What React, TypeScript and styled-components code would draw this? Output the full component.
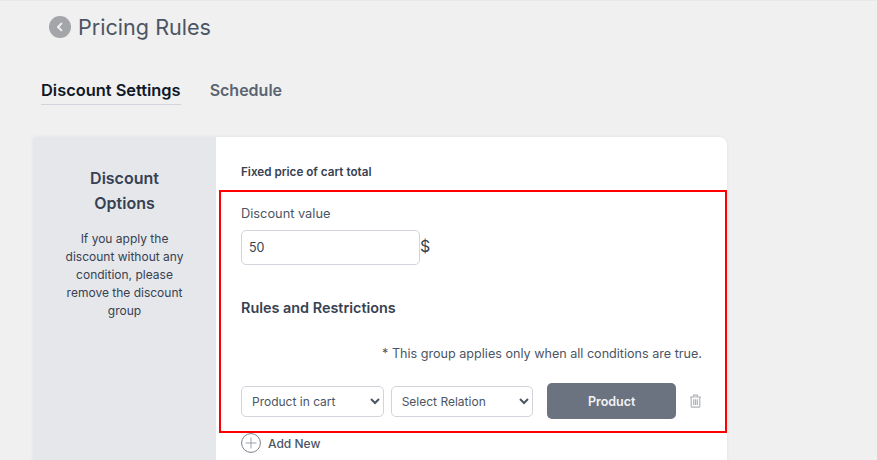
import React from "react";
import styled, { createGlobalStyle } from "styled-components";

const GlobalStyle = createGlobalStyle`
  html, body {
    margin: 0;
    height: 100%;
    overflow: hidden;
    background: #f0f0f1;
    font-family: Inter, "Liberation Sans", sans-serif;
  }
`;

const Page = styled.div`
  width: 877px;
  height: 460px;
  overflow: hidden;
  box-sizing: border-box;
  border-top: 1px solid #e8e8e9;
`;

const Header = styled.header`
  display: flex;
  align-items: center;
  gap: 7px;
  padding: 11px 0 0 49px;
  height: 30px;
`;

const BackButton = styled.span`
  display: flex;
  align-items: center;
  justify-content: center;
  width: 22px;
  height: 22px;
  border-radius: 50%;
  background: #a3a5a8;
`;

const Title = styled.h1`
  margin: 0;
  font-size: 21.6px;
  line-height: 30px;
  font-weight: 400;
  color: #4b5563;
`;

const Tabs = styled.nav`
  display: flex;
  gap: 29px;
  padding: 37px 0 0 41px;
  height: 32px;
`;

const Tab = styled.span<{ $active?: boolean }>`
  height: 25px;
  font-size: ${(p) => (p.$active ? "16.4px" : "16px")};
  line-height: 22px;
  font-weight: 600;
  color: ${(p) => (p.$active ? "#111827" : "#5b6472")};
  border-bottom: ${(p) => (p.$active ? "1px solid #d1d5db" : "none")};
`;

const Card = styled.section`
  display: flex;
  width: 694px;
  height: 340px;
  margin: 26px 0 0 33px;
  background: #fff;
  border-radius: 2px 8px 0 0;
  box-shadow: 0 0 4px rgba(0, 0, 0, 0.06);
`;

const Sidebar = styled.aside`
  width: 183px;
  flex: none;
  box-sizing: border-box;
  padding: 29px 30px 0;
  background: #e5e7eb;
  border-radius: 2px 0 0 0;
  text-align: center;
`;

const SidebarTitle = styled.h2`
  margin: 0 0 14px;
  font-size: 16px;
  line-height: 25px;
  font-weight: 600;
  color: #374151;
`;

const SidebarText = styled.p`
  margin: 0;
  font-size: 12px;
  line-height: 18px;
  color: #374151;
`;

const Main = styled.div`
  flex: 1;
  min-width: 0;
  padding: 27px 0 0 3px;
`;

const Subtitle = styled.div`
  margin-left: 22px;
  font-size: 11.7px;
  line-height: 16px;
  font-weight: 600;
  color: #374151;
`;

const Highlight = styled.div`
  box-sizing: border-box;
  height: 243px;
  margin-top: 10px;
  padding: 14px 23px 0 20px;
  border: 2px solid #f00;
`;

const FieldLabel = styled.label`
  display: block;
  font-size: 12.8px;
  line-height: 16px;
  color: #4b5563;
`;

const ValueRow = styled.div`
  display: flex;
  align-items: center;
  margin-top: 8px;
`;

const ValueInput = styled.input`
  box-sizing: border-box;
  width: 179px;
  height: 35px;
  padding: 0 7px;
  border: 1px solid #d1d5db;
  border-radius: 5px;
  background: #fff;
  font-family: inherit;
  font-size: 12.5px;
  color: #374151;
  outline: none;
`;

const Currency = styled.span`
  margin-top: -3px;
  font-size: 16px;
  color: #374151;
`;

const SectionTitle = styled.h3`
  margin: 34px 0 0;
  font-size: 14.4px;
  line-height: 18px;
  font-weight: 600;
  color: #374151;
`;

const Note = styled.p`
  margin: 29px 0 0;
  font-size: 12.6px;
  line-height: 16px;
  text-align: right;
  color: #4b5563;
`;

const RuleRow = styled.div`
  display: flex;
  align-items: center;
  margin-top: 21px;
`;

const RuleSelect = styled.select<{ $width: number }>`
  box-sizing: border-box;
  width: ${(p) => p.$width}px;
  height: 31px;
  margin-right: 7px;
  padding: 0 6px;
  border: 1px solid #d1d5db;
  border-radius: 5px;
  background: #fff;
  font-family: inherit;
  font-size: 12px;
  color: #4b5563;
  outline: none;
`;

const ProductButton = styled.button`
  width: 129px;
  height: 36px;
  margin-left: 7px;
  border: none;
  border-radius: 5px;
  background: #6b7280;
  font-family: inherit;
  font-size: 12.5px;
  font-weight: 600;
  color: #f3f4f6;
`;

const TrashButton = styled.span`
  display: flex;
  margin-left: 13px;
  color: #b0b3b8;
`;

const AddNew = styled.div`
  display: flex;
  align-items: center;
  gap: 7px;
  margin: 0 0 0 22px;
  font-size: 12px;
  font-weight: 500;
  color: #4b5563;
`;

const BackIcon = () => (
  <svg width="10" height="10" viewBox="0 0 10 10" fill="none">
    <path d="M6.4 1.6 3 5l3.4 3.4" stroke="#f0f0f1" strokeWidth="2" strokeLinecap="round" strokeLinejoin="round" />
  </svg>
);

const TrashIcon = () => (
  <svg width="13" height="14" viewBox="0 0 13 14" fill="none" stroke="currentColor" strokeWidth="1.2">
    <path d="M1 3h11M4.5 3V1.2h4V3M2.2 3v9.2c0 .5.4.9.9.9h6.8c.5 0 .9-.4.9-.9V3" />
    <path d="M4.7 5.2v5.8M6.5 5.2v5.8M8.3 5.2v5.8" />
  </svg>
);

const PlusIcon = () => (
  <svg width="20" height="20" viewBox="0 0 20 20" fill="none">
    <circle cx="10" cy="10" r="9.4" stroke="#7b808a" strokeWidth="1" />
    <path d="M10 4.5v11M4.5 10h11" stroke="#9ca3af" strokeWidth="1" />
  </svg>
);

export default function App(): JSX.Element {
  return (
    <Page>
      <GlobalStyle />
      <Header>
        <BackButton>
          <BackIcon />
        </BackButton>
        <Title>Pricing Rules</Title>
      </Header>
      <Tabs>
        <Tab $active>Discount Settings</Tab>
        <Tab>Schedule</Tab>
      </Tabs>
      <Card>
        <Sidebar>
          <SidebarTitle>Discount Options</SidebarTitle>
          <SidebarText>
            If you apply the discount without any condition, please remove the discount group
          </SidebarText>
        </Sidebar>
        <Main>
          <Subtitle>Fixed price of cart total</Subtitle>
          <Highlight>
            <FieldLabel>Discount value</FieldLabel>
            <ValueRow>
              <ValueInput defaultValue="50" />
              <Currency>$</Currency>
            </ValueRow>
            <SectionTitle>Rules and Restrictions</SectionTitle>
            <Note>* This group applies only when all conditions are true.</Note>
            <RuleRow>
              <RuleSelect $width={143} defaultValue="cart">
                <option value="cart">Product in cart</option>
              </RuleSelect>
              <RuleSelect $width={143} defaultValue="none">
                <option value="none">Select Relation</option>
              </RuleSelect>
              <ProductButton>Product</ProductButton>
              <TrashButton>
                <TrashIcon />
              </TrashButton>
            </RuleRow>
          </Highlight>
          <AddNew>
            <PlusIcon />
            Add New
          </AddNew>
        </Main>
      </Card>
    </Page>
  );
}
